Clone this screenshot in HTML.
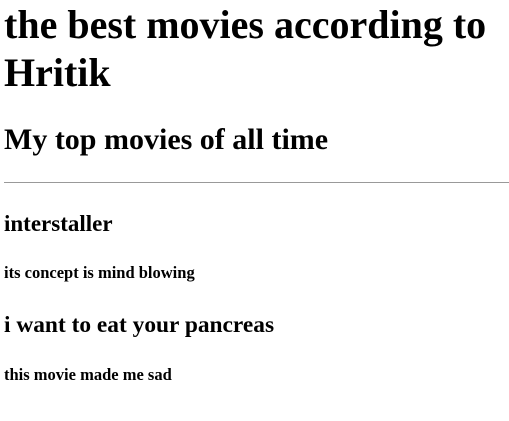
<!DOCTYPE html>
<html><head><style>
html,body{margin:0;padding:0;background:#fff;width:509px;height:421px;overflow:hidden;}
body{font-family:"Liberation Serif",serif;font-weight:bold;color:#000;position:relative;}
.t{position:absolute;left:4px;white-space:nowrap;line-height:1;}
hr{position:absolute;left:4px;right:0;top:182px;margin:0;border:0;border-top:1px solid #999;height:0;}
</style></head><body>
<div class="t" style="font-size:40px;top:5px">the best movies according to</div>
<div class="t" style="font-size:40px;top:53px">Hritik</div>
<div class="t" style="font-size:30px;top:125px">My top movies of all time</div>
<hr>
<div class="t" style="font-size:23px;top:212px">interstaller</div>
<div class="t" style="font-size:16.5px;top:265px">its concept is mind blowing</div>
<div class="t" style="font-size:23.4px;top:314px">i want to eat your pancreas</div>
<div class="t" style="font-size:16.5px;top:367px">this movie made me sad</div>
</body></html>
